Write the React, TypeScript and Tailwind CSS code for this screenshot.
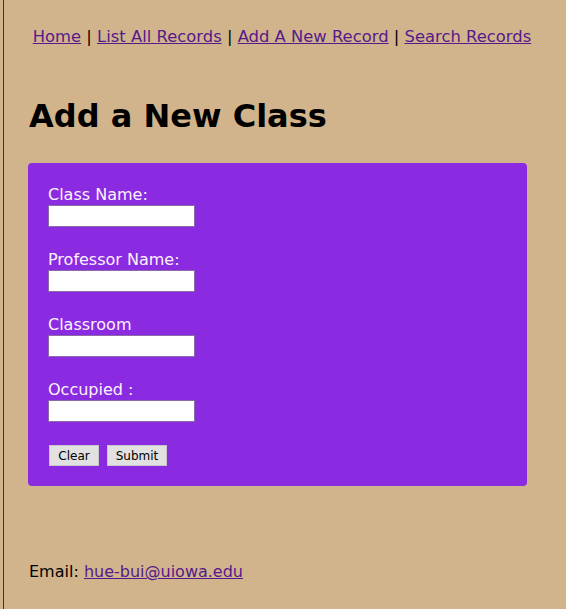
import React from 'react';

const FIELDS = ['Class Name:', 'Professor Name:', 'Classroom', 'Occupied :'];

export default function App() {
  return (
    <div className="min-h-screen bg-[#d2b48c] pl-[3px] font-['DejaVu_Sans',Verdana,sans-serif] text-black">
      <div className="min-h-screen border-l border-[#4b3418] pl-[24px] pt-[26px]">
        {/* Nav */}
        <nav className="-ml-[24px] w-[556px] text-center text-[16.4px] leading-[22px]">
          <a href="#" className="text-[#551a8b] underline">Home</a> |{' '}
          <a href="#" className="text-[#551a8b] underline">List All Records</a> |{' '}
          <a href="#" className="text-[#551a8b] underline">Add A New Record</a> |{' '}
          <a href="#" className="text-[#551a8b] underline">Search Records</a>
        </nav>

        <h1 className="mt-[48px] pl-[1px] text-[32px] font-bold leading-[40px]">Add a New Class</h1>

        {/* Form */}
        <form className="mt-[27px] w-[499px] rounded-[4px] bg-[#8a2be2] px-[20px] pb-[20px] pt-[21px]">
          {FIELDS.map((label) => (
            <div key={label} className="mb-[22px]">
              <label className="block text-[16px] leading-[21px] text-[#fdf2fb]">{label}</label>
              <input type="text" className="block h-[22px] w-[147px] border border-[#8c6aa8] bg-white" />
            </div>
          ))}
          <div className="flex gap-[8px] pl-[1px] pt-[1px]">
            <button type="button" className="h-[21px] w-[50px] border border-[#c8c8c8] bg-[#e1e1e1] text-[12px] text-black">
              Clear
            </button>
            <button type="button" className="h-[21px] w-[60px] border border-[#c8c8c8] bg-[#e1e1e1] text-[12px] text-black">
              Submit
            </button>
          </div>
        </form>

        <p className="mt-[75px] pl-[1px] text-[16px] leading-[22px]">
          Email: <a href="#" className="text-[#551a8b] underline">hue-bui@uiowa.edu</a>
        </p>
      </div>
    </div>
  );
}
